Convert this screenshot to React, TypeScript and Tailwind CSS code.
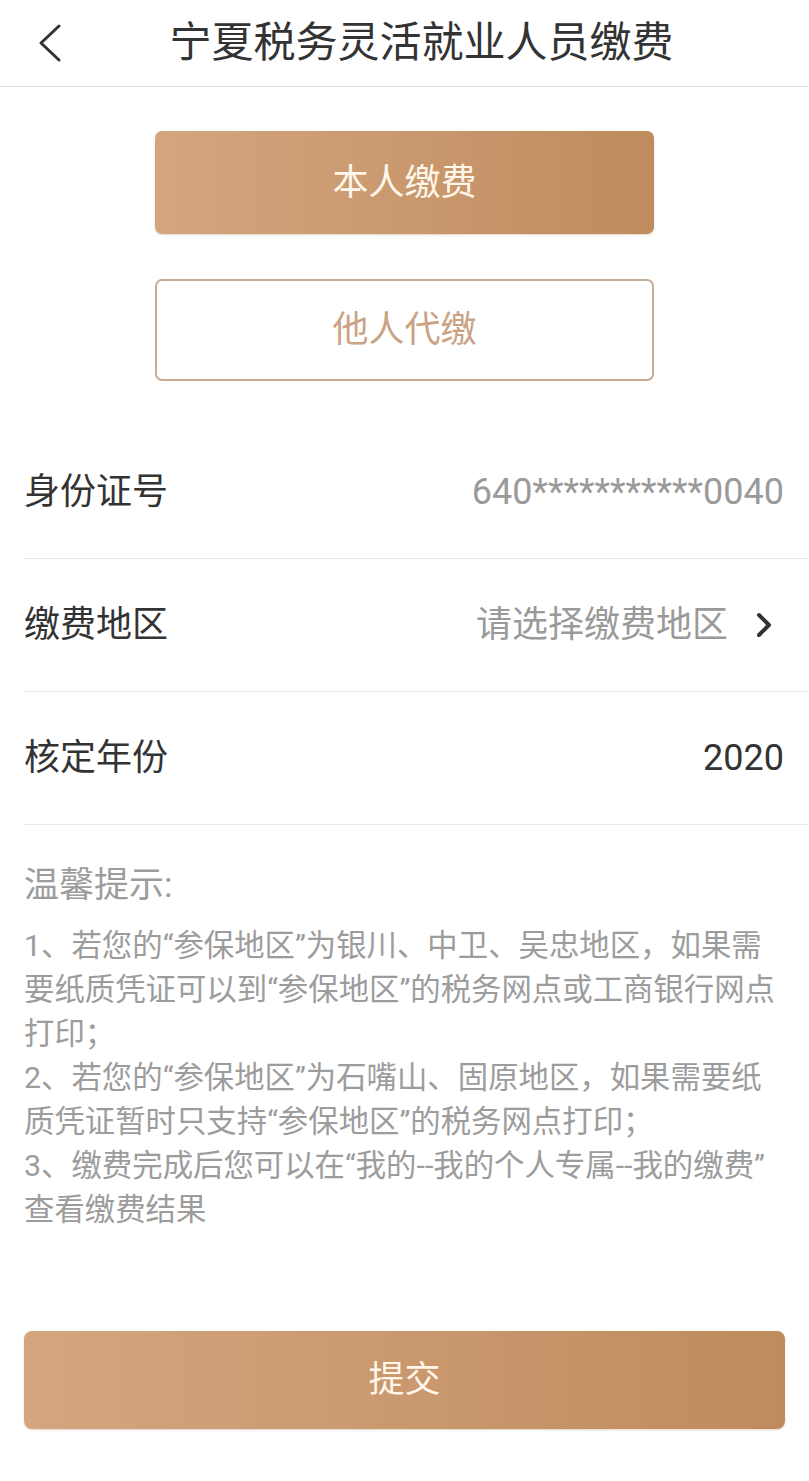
import React from "react";

const FONT = { fontFamily: 'Roboto, "Noto Sans CJK SC", sans-serif' };

function Row({ label, children }: { label: string; children: React.ReactNode }) {
  return (
    <div className="ml-[24px] h-[133px] flex items-center justify-between border-b border-[#e8e8e8] pr-[25px]">
      <span className="text-[36px] text-[#333333] leading-none">{label}</span>
      <div className="flex items-center">{children}</div>
    </div>
  );
}

export default function App() {
  const tips = [
    "1、若您的“参保地区”为银川、中卫、吴忠地区，如果需",
    "要纸质凭证可以到“参保地区”的税务网点或工商银行网点",
    "打印；",
    "2、若您的“参保地区”为石嘴山、固原地区，如果需要纸",
    "质凭证暂时只支持“参保地区”的税务网点打印；",
    "3、缴费完成后您可以在“我的--我的个人专属--我的缴费”",
    "查看缴费结果",
  ];
  return (
    <div className="w-[809px] min-h-[1481px] bg-white" style={FONT}>
      {/* Header */}
      <div className="h-[87px] flex items-center border-b border-[#e2e2e2]">
        <div className="w-[100px] pl-[38px] flex items-center">
          <svg width="24" height="38" viewBox="0 0 24 38" fill="none">
            <path d="M21 2 L3 19 L21 36" stroke="#333333" strokeWidth="3" strokeLinecap="round" strokeLinejoin="round" />
          </svg>
        </div>
        <div className="flex-1 text-center text-[42px] text-[#333333] leading-none whitespace-nowrap">
          宁夏税务灵活就业人员缴费
        </div>
        <div className="w-[66px]" />
      </div>

      {/* Top buttons */}
      <div className="pt-[44px] flex flex-col items-center gap-[45px]">
        <div className="w-[499px] h-[103px] rounded-[7px] bg-gradient-to-r from-[#d3a67f] to-[#c08b5d] flex items-center justify-center shadow-[0_1px_2px_rgba(150,110,80,0.3)]">
          <span className="text-[36px] text-[#fff6ea] leading-none">本人缴费</span>
        </div>
        <div className="w-[499px] h-[102px] rounded-[7px] border-2 border-[#c6ab95] flex items-center justify-center">
          <span className="text-[36px] text-[#c9a383] leading-none">他人代缴</span>
        </div>
      </div>

      {/* Form rows */}
      <div className="mt-[45px]">
        <Row label="身份证号">
          <span className="text-[36px] text-[#9a9a9a] leading-none">640***********0040</span>
        </Row>
        <Row label="缴费地区">
          <span className="text-[36px] text-[#9a9a9a] leading-none">请选择缴费地区</span>
          <svg className="ml-[28px] mr-[12px]" width="16" height="26" viewBox="0 0 16 26" fill="none">
            <path d="M3 3 L13 13 L3 23" stroke="#333333" strokeWidth="4" strokeLinecap="round" strokeLinejoin="round" />
          </svg>
        </Row>
        <Row label="核定年份">
          <span className="text-[36px] text-[#333333] leading-none">2020</span>
        </Row>
      </div>

      {/* Tips */}
      <div className="px-[24px] pt-[41px]">
        <div className="text-[35px] text-[#9c9c9c] leading-[40px]">温馨提示:</div>
        <div className="mt-[18px]">
          {tips.map((t, i) => (
            <div key={i} className="text-[30.4px] text-[#9c9c9c] leading-[44px] whitespace-nowrap">
              {t}
            </div>
          ))}
        </div>
      </div>

      {/* Submit */}
      <div className="px-[24px] mt-[99px]">
        <div className="h-[98px] rounded-[8px] bg-gradient-to-r from-[#d3a67f] to-[#c08b5d] flex items-center justify-center shadow-[0_1px_2px_rgba(150,110,80,0.3)]">
          <span className="text-[36px] text-[#fff6ea] leading-none">提交</span>
        </div>
      </div>
    </div>
  );
}
